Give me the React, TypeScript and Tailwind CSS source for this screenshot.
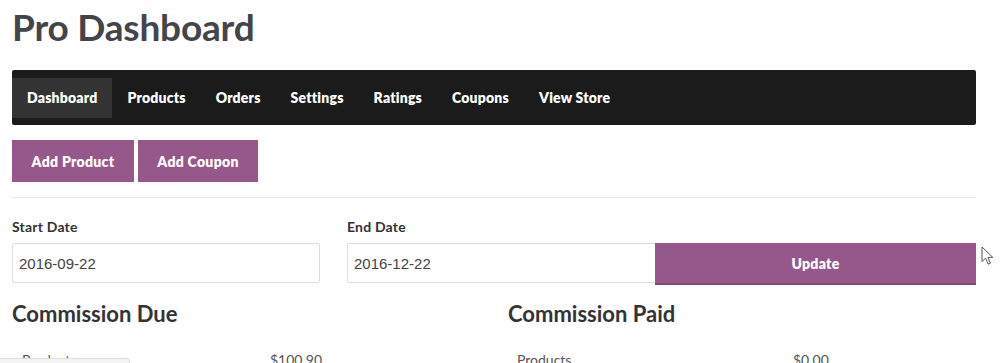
const navItems = ['Dashboard', 'Products', 'Orders', 'Settings', 'Ratings', 'Coupons', 'View Store'];

function Cursor() {
  return (
    <svg className="absolute left-[981px] top-[246px]" width="14" height="20" viewBox="0 0 14 20">
      <path
        d="M1 1 L1 15.5 L4.6 12.2 L7.2 18.2 L9.4 17.2 L6.9 11.4 L11.8 11.4 Z"
        fill="white"
        stroke="#555"
        strokeWidth="1"
        strokeLinejoin="round"
      />
    </svg>
  );
}

export default function App() {
  return (
    <div className="relative h-[363px] w-[1000px] overflow-hidden bg-white font-['Lato',sans-serif] text-[#333]">
      <div className="w-[976px] pl-[12px]">
        <h1 className="pt-[5px] text-[37px] font-bold leading-[44px] tracking-[-0.2px] text-[#43454b]">
          Pro Dashboard
        </h1>

        <nav className="mt-[21px] flex h-[55px] items-center rounded-[2px] bg-[#1b1b1b]">
          {navItems.map((item, i) => (
            <a
              key={item}
              href="#"
              className={
                i === 0
                  ? 'flex h-[40px] items-center bg-[#333] px-[15px] text-[14px] font-extrabold tracking-[0.2px] text-white'
                  : 'flex h-[40px] items-center px-[15px] text-[14px] font-extrabold tracking-[0.2px] text-white'
              }
            >
              {item}
            </a>
          ))}
        </nav>

        <div className="mt-[15px] flex gap-[4px]">
          <button className="h-[42px] w-[122px] bg-[#96588a] text-[14px] font-extrabold tracking-[0.3px] text-white">
            Add Product
          </button>
          <button className="h-[42px] w-[120px] bg-[#96588a] text-[14px] font-extrabold tracking-[0.3px] text-white">
            Add Coupon
          </button>
        </div>

        <hr className="mt-[15px] border-t-[1px] border-[#e6e6e6]" />

        <div className="mt-[20px] flex">
          <div className="w-[308px]">
            <label className="block text-[14px] font-bold leading-[18px] tracking-[0.2px] text-[#333]">Start Date</label>
            <input
              defaultValue="2016-09-22"
              className="mt-[7px] h-[40px] w-full rounded-[2px] border border-[#ddd] px-[6px] font-['Liberation_Sans',sans-serif] text-[15px] text-[#444] outline-none"
            />
          </div>
          <div className="ml-[27px] w-[308px]">
            <label className="block text-[14px] font-bold leading-[18px] tracking-[0.2px] text-[#333]">End Date</label>
            <input
              defaultValue="2016-12-22"
              className="mt-[7px] h-[40px] w-full rounded-l-[2px] border border-r-0 border-[#ddd] px-[6px] font-['Liberation_Sans',sans-serif] text-[15px] text-[#444] outline-none"
            />
          </div>
          <div className="flex flex-1 items-end">
            <button className="h-[42px] w-full translate-y-[2px] border-b-[2px] border-[#7d4a73] bg-[#96588a] text-[14px] font-extrabold tracking-[0.3px] text-white">
              Update
            </button>
          </div>
        </div>

        <div className="mt-[17px] flex">
          <div className="w-[496px]">
            <h2 className="text-[22px] font-bold leading-[28px] text-[#333]">Commission Due</h2>
            <div className="mt-[23px] flex text-[14px] leading-[18px] text-[#555]">
              <span className="w-[258px] pl-[10px]">Products</span>
              <span>$100.90</span>
            </div>
          </div>
          <div className="flex-1">
            <h2 className="text-[22px] font-bold leading-[28px] text-[#333]">Commission Paid</h2>
            <div className="mt-[23px] flex text-[14px] leading-[18px] text-[#555]">
              <span className="w-[285px] pl-[9px]">Products</span>
              <span>$0.00</span>
            </div>
          </div>
        </div>
      </div>

      <div className="absolute bottom-0 left-0 h-[5px] w-[130px] rounded-tr-[4px] border-t border-r border-[#ddd] bg-[#f3f3f3]" />

      <Cursor />
    </div>
  );
}
